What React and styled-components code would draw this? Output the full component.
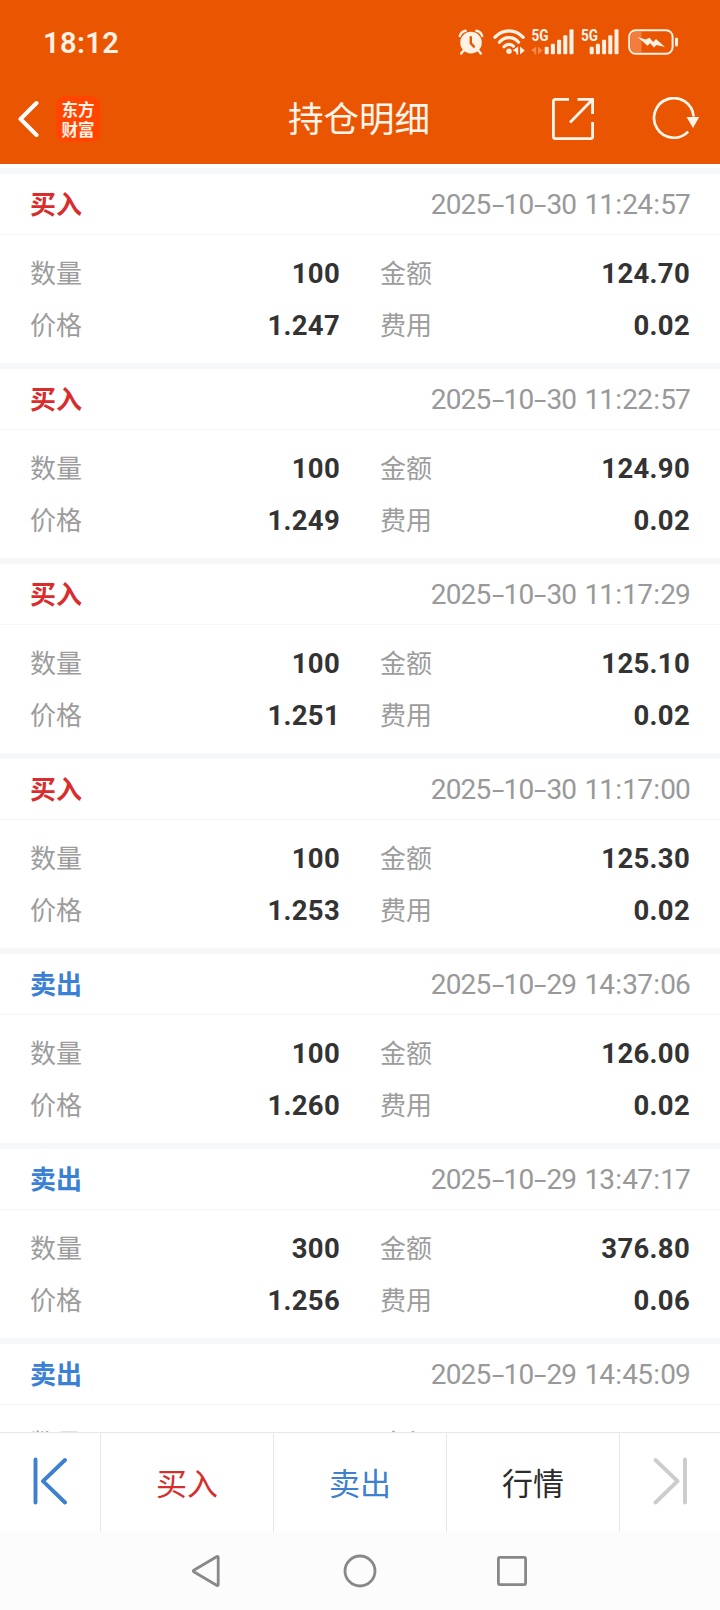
import React from "react";
import styled, { createGlobalStyle } from "styled-components";

const records = [
  { side: "buy", date: "2025-10-30", time: "11:24:57", count: "100", amount: "124.70", price: "1.247", fee: "0.02" },
  { side: "buy", date: "2025-10-30", time: "11:22:57", count: "100", amount: "124.90", price: "1.249", fee: "0.02" },
  { side: "buy", date: "2025-10-30", time: "11:17:29", count: "100", amount: "125.10", price: "1.251", fee: "0.02" },
  { side: "buy", date: "2025-10-30", time: "11:17:00", count: "100", amount: "125.30", price: "1.253", fee: "0.02" },
  { side: "sell", date: "2025-10-29", time: "14:37:06", count: "100", amount: "126.00", price: "1.260", fee: "0.02" },
  { side: "sell", date: "2025-10-29", time: "13:47:17", count: "300", amount: "376.80", price: "1.256", fee: "0.06" },
  { side: "sell", date: "2025-10-29", time: "14:45:09" },
];

const sideText = { buy: "买入", sell: "卖出" };
const barHeights = [7.5, 10.5, 14.5, 19, 25];

const AlarmIcon = () => (
  <svg width="26" height="26" viewBox="0 0 26 26">
    <circle cx="13" cy="13.6" r="10.8" fill="#fff1e4" />
    <path d="M1.800 7A7.500 7.500 0 0 1 7.600 1.800M24.200 7A7.500 7.500 0 0 0 18.400 1.800M5.600 21.500l-2.400 3M20.400 21.500l2.400 3" fill="none" stroke="#fff1e4" strokeWidth="2.400" strokeLinecap="round" />
    <path d="M12.800 8.200v6l3.200 3.400" fill="none" stroke="#ea5502" strokeWidth="2.400" strokeLinecap="round" />
  </svg>
);

const WifiIcon = () => (
  <svg width="32" height="26" viewBox="0 0 32 26">
    <g fill="none" stroke="#fff1e4" strokeWidth="3.2" strokeLinecap="round">
      <path d="M1.8 8.4C9.5 -.4 22.5 -.4 30.2 8.4" />
      <path d="M6.4 13.2C11.6 7 20.4 7 25.6 13.2" />
      <path d="M11 17.8C13.8 14.6 18.2 14.6 20.5 17.3" />
    </g>
    <circle cx="16" cy="22.3" r="2.7" fill="#fff1e4" />
    <path d="M25.2 17.4v8h-1.9v-2.2l-3.6-1.900zM27 17.4v8l4.800-4z" fill="#fff1e4" />
  </svg>
);

const SignalIcon = ({ traffic }) => (
  <svg width={traffic ? 43 : 38} height="26" viewBox={traffic ? "-5 0 43 26" : "0 0 38 26"} overflow="visible">
    <text x={traffic ? -4.5 : 0} y="12.4" fontFamily="Roboto, sans-serif" fontSize="16.5" fontWeight="700" fill="#fff1e4" textLength="17" lengthAdjust="spacingAndGlyphs">
      5G
    </text>
    {traffic && <path d="M.2 17.400v8h-1.800v-2.200l-3.400-1.900zM2 17.400v8l4.600-4z" fill="#f58a4c" />}
    {barHeights.map((height, index) => (
      <rect key={height} x={8.7 + index * 6.2} y={25.3 - height} width="4" height={height} rx="1" fill="#fff1e4" />
    ))}
  </svg>
);

const BatteryIcon = () => (
  <svg width="51" height="26" viewBox="0 0 51 26">
    <path d="M8 2.5h5.500v21H8a5 5 0 0 1-5-5v-11a5 5 0 0 1 5-5z" fill="#f27e3e" />
    <rect x="1.2" y="1.2" width="43.4" height="23.6" rx="6.5" fill="none" stroke="#fff1e4" strokeWidth="2" />
    <rect x="47" y="8.5" width="3" height="9" rx="1.5" fill="#fff1e4" />
    <path d="M9.500 8l8.200 2.400 3.800-1.700 3.700 4.300 2.800-3L37 18l-8.500-2-2.500 2.500-3.800-4.300-2.700 2.500z" fill="#fff1e4" />
  </svg>
);

const BackIcon = () => (
  <svg width="22" height="38" viewBox="0 0 22 38">
    <path d="M18.5 3L2.5 19l16 16" fill="none" stroke="#fff" strokeWidth="4" strokeLinecap="round" strokeLinejoin="round" />
  </svg>
);

const ShareIcon = () => (
  <svg width="42" height="42" viewBox="0 0 42 42">
    <path d="M17 1.400H3A1.600 1.600 0 0 0 1.400 3v36A1.600 1.600 0 0 0 3 40.600h36a1.600 1.600 0 0 0 1.600-1.600V24M25.500 1.400h15.100V16M40 2L18 24.500" fill="none" stroke="#fff5ea" strokeWidth="2.8" />
  </svg>
);

const RefreshIcon = () => (
  <svg width="48" height="44" viewBox="0 0 48 44">
    <path d="M36.200 34.600A19.800 19.800 0 1 1 41.600 19.500" fill="none" stroke="#fff5ea" strokeWidth="2.7" />
    <path d="M34.500 20h12.700l-6.200 11z" fill="#fff5ea" />
  </svg>
);

const EdgeIcon = ({ flip }) => (
  <svg width="34" height="48" viewBox="0 0 34 48">
    <path
      d="M2.5 2.5v43M32 3L10 24.2 32 45.5"
      transform={flip ? "translate(34.5 0) scale(-1 1)" : undefined}
      fill="none"
      stroke={flip ? "#ccc" : "#3e80d0"}
      strokeWidth="3.9"
      strokeLinecap="round"
      strokeLinejoin="round"
    />
  </svg>
);

const Field = ({ label, value }) => (
  <FieldRow>
    <Label>{label}</Label>
    {value && <Value>{value}</Value>}
  </FieldRow>
);

const DateTime = ({ date, time }) => (
  <Stamp>
    {date.split("-").map((part, index) => (
      <React.Fragment key={index}>
        {index > 0 && <Dash>-</Dash>}
        {part}
      </React.Fragment>
    ))}{" "}
    {time.split(":").map((part, index) => (
      <React.Fragment key={index}>
        {index > 0 && <Colon>:</Colon>}
        {part}
      </React.Fragment>
    ))}
  </Stamp>
);

const App = () => {
  return (
    <Screen>
      <GlobalStyle />
      <Header>
        <StatusBar>
          <Clock>18:12</Clock>
          <StatusIcons>
            <AlarmIcon />
            <WifiIcon />
            <SignalIcon traffic />
            <SignalIcon />
            <BatteryIcon />
          </StatusIcons>
        </StatusBar>
        <TitleBar>
          <TitleSide>
            <BackIcon />
            <Brand>
              <span>东方</span>
              <span>财富</span>
            </Brand>
          </TitleSide>
          <Title>持仓明细</Title>
          <TitleActions>
            <ShareIcon />
            <RefreshIcon />
          </TitleActions>
        </TitleBar>
      </Header>
      <List>
        {records.map((record, index) => (
          <Card key={index}>
            <CardHead>
              <Side $side={record.side}>{sideText[record.side]}</Side>
              <DateTime date={record.date} time={record.time} />
            </CardHead>
            <CardBody>
              <Field label="数量" value={record.count} />
              <Field label="金额" value={record.amount} />
              {record.price && <Field label="价格" value={record.price} />}
              {record.fee && <Field label="费用" value={record.fee} />}
            </CardBody>
          </Card>
        ))}
      </List>
      <BottomBar>
        <BottomButton>
          <EdgeIcon />
        </BottomButton>
        <BottomButton $color="#d52f2c">买入</BottomButton>
        <BottomButton $color="#3e80d0">卖出</BottomButton>
        <BottomButton $color="#2b2b2b">行情</BottomButton>
        <BottomButton>
          <EdgeIcon flip />
        </BottomButton>
      </BottomBar>
      <SystemNav>
        <svg width="33" height="34" viewBox="0 0 33 34">
          <path d="M28.2 3.2v27.600a.8.8 0 0 1-1.200.7L3.800 17.800a.9.9 0 0 1 0-1.600L27 2.500a.8.8 0 0 1 1.200.7z" fill="none" stroke="#888" strokeWidth="2.8" />
        </svg>
        <svg width="34" height="34" viewBox="0 0 34 34">
          <circle cx="17" cy="17" r="15" fill="none" stroke="#888" strokeWidth="2.8" />
        </svg>
        <svg width="30" height="34" viewBox="0 0 30 34">
          <rect x="1.4" y="3.4" width="27.2" height="27.2" rx="1.5" fill="none" stroke="#888" strokeWidth="2.8" />
        </svg>
      </SystemNav>
    </Screen>
  );
};

const GlobalStyle = createGlobalStyle`
  * {
    box-sizing: border-box;
  }
  body {
    margin: 0;
    font-family: Roboto, "Noto Sans CJK SC", sans-serif;
  }
  svg {
    display: block;
    flex-shrink: 0;
  }
`;

const Screen = styled.div`
  display: flex;
  flex-direction: column;
  width: 720px;
  height: 1610px;
  overflow: hidden;
  background-color: #fff;
`;

const Header = styled.header`
  flex-shrink: 0;
  height: 164px;
  background-color: #ea5502;
`;

const StatusBar = styled.div`
  display: flex;
  align-items: center;
  justify-content: space-between;
  height: 74px;
  padding: 10px 41px 0 43px;
`;

const Clock = styled.span`
  padding-top: 1px;
  font-size: 29px;
  font-weight: 600;
  line-height: 30px;
  letter-spacing: 0.4px;
  color: #fff1e4;
`;

const StatusIcons = styled.div`
  display: flex;
  align-items: center;

  & > svg:nth-child(2) {
    margin-left: 9px;
  }
  & > svg:nth-child(3) {
    margin-left: 6px;
  }
  & > svg:nth-child(4) {
    margin-left: 7px;
  }
  & > svg:nth-child(5) {
    margin-left: 9px;
  }
`;

const TitleBar = styled.div`
  display: grid;
  grid-template-columns: 1fr auto 1fr;
  align-items: center;
  height: 90px;
  padding: 0 20px 0 18px;
`;

const TitleSide = styled.div`
  display: flex;
  align-items: center;
  gap: 16px;
`;

const Brand = styled.div`
  display: flex;
  flex-direction: column;
  align-items: center;
  justify-content: center;
  width: 44px;
  height: 46px;
  border-radius: 9px;
  background-color: #ff4500;
  color: #fff1e4;
  font-family: "Noto Sans CJK SC", sans-serif;
  font-size: 16.5px;
  font-weight: 700;
  line-height: 20px;
  padding-bottom: 1px;
`;

const Title = styled.h1`
  margin: 0;
  padding-bottom: 4px;
  font-family: "Noto Sans CJK SC", sans-serif;
  font-size: 35.5px;
  font-weight: 400;
  line-height: 44px;
  color: #fff5ea;
`;

const TitleActions = styled.div`
  display: flex;
  align-items: center;
  justify-content: flex-end;
  gap: 58px;
`;

const List = styled.main`
  flex: 1;
  min-height: 0;
  overflow: hidden;
  padding-top: 4px;
`;

const Card = styled.section`
  height: 195px;
  border-top: 6px solid #f6f7f9;
`;

const CardHead = styled.div`
  display: flex;
  align-items: center;
  justify-content: space-between;
  height: 61px;
  padding: 0 30px;
  border-bottom: 1px solid #f4f5f6;
`;

const Side = styled.span`
  padding-bottom: 2px;
  font-family: "Noto Sans CJK SC", sans-serif;
  font-size: 26px;
  font-weight: 700;
  line-height: 36px;
  color: ${({ $side }) => ($side === "buy" ? "#d92c2c" : "#3a80d4")};
`;

const Stamp = styled.span`
  padding-top: 2px;
  font-size: 28px;
  line-height: 36px;
  letter-spacing: -0.8px;
  word-spacing: 2px;
  color: #999;
`;

const Dash = styled.span`
  display: inline-block;
  width: 13px;
  text-align: center;
  transform: scaleX(1.6);
`;

const Colon = styled.span`
  padding: 0 1px;
`;

const CardBody = styled.div`
  display: grid;
  grid-template-columns: 310px 310px;
  grid-auto-rows: 52px;
  column-gap: 40px;
  padding: 12px 30px;
`;

const FieldRow = styled.div`
  display: flex;
  align-items: center;
  justify-content: space-between;
`;

const Label = styled.span`
  padding-bottom: 2px;
  font-family: "Noto Sans CJK SC", sans-serif;
  font-size: 26px;
  line-height: 36px;
  font-weight: 400;
  color: #9c9c9c;
`;

const Value = styled.span`
  padding-top: 2px;
  font-size: 27.5px;
  font-weight: 700;
  line-height: 36px;
  letter-spacing: 0.3px;
  color: #333;
`;

const BottomBar = styled.div`
  display: grid;
  grid-template-columns: 101px 173px 173px 173px 100px;
  flex-shrink: 0;
  height: 100px;
  border-top: 1px solid #e8e8e8;
`;

const BottomButton = styled.button`
  display: flex;
  align-items: center;
  justify-content: center;
  padding: 0 0 3px;
  border: 0;
  border-right: 1px solid #e8e8e8;
  background-color: #fff;
  font-family: "Noto Sans CJK SC", sans-serif;
  font-size: 31px;
  color: ${({ $color }) => $color || "#333"};
  cursor: pointer;

  &:last-child {
    border-right: 0;
  }
`;

const SystemNav = styled.nav`
  display: flex;
  align-items: center;
  gap: 120px;
  flex-shrink: 0;
  height: 78px;
  padding-left: 190px;
  background-color: #fcfcfc;
`;

export default App;
